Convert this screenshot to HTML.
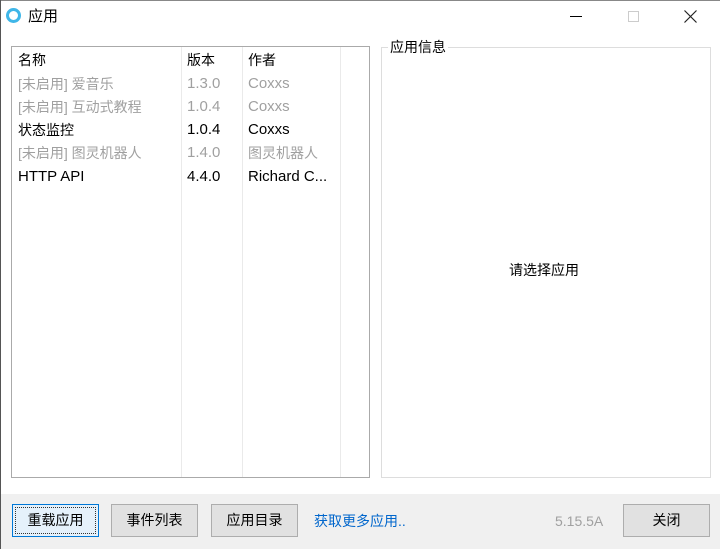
<!DOCTYPE html>
<html><head><meta charset="utf-8"><style>
*{margin:0;padding:0;box-sizing:border-box}
body{width:720px;height:549px;overflow:hidden;background:#fff;font-family:"Liberation Sans","Noto Sans CJK SC",sans-serif;font-size:14px;color:#000;position:relative}
.a{position:absolute;white-space:nowrap;line-height:20px}
.l{font-size:15px}
.g{color:#a0a0a0}
.btn{position:absolute;top:504px;height:33px;background:#e1e1e1;border:1px solid #adadad;text-align:center;line-height:31px;font-size:14px}
</style></head><body>
<div class="a" style="left:0;top:0;width:720px;height:1px;background:#888"></div>
<div class="a" style="left:0;top:0;width:1px;height:549px;background:#555"></div>
<div class="a" style="left:6px;top:8px;width:15px;height:15px;border-radius:50%;border:3px solid #3fb6e8"></div>
<div class="a" style="left:28px;top:7px;font-size:15px">应用</div>
<div class="a" style="left:570px;top:16px;width:12px;height:1px;background:#000"></div>
<div class="a" style="left:628px;top:11px;width:11px;height:11px;border:1px solid #ccc"></div>
<svg class="a" style="left:684px;top:10px" width="13" height="13"><path d="M0.5 0.5L12.5 12.5M12.5 0.5L0.5 12.5" stroke="#222" stroke-width="1.2"/></svg>

<div class="a" style="left:11px;top:46px;width:359px;height:432px;border:1px solid #aaa;background:#fff"></div>
<div class="a" style="left:181px;top:47px;width:1px;height:430px;background:#eaeaea"></div>
<div class="a" style="left:242px;top:47px;width:1px;height:430px;background:#eaeaea"></div>
<div class="a" style="left:340px;top:47px;width:1px;height:430px;background:#eaeaea"></div>

<div class="a" style="left:18px;top:50px">名称</div><div class="a" style="left:187px;top:50px">版本</div><div class="a" style="left:248px;top:50px">作者</div>
<div class="a g" style="left:18px;top:74px">[未启用] 爱音乐</div><div class="a g l" style="left:187px;top:74px">1.3.0</div><div class="a g l" style="left:248px;top:74px">Coxxs</div>
<div class="a g" style="left:18px;top:97px">[未启用] 互动式教程</div><div class="a g l" style="left:187px;top:97px">1.0.4</div><div class="a g l" style="left:248px;top:97px">Coxxs</div>
<div class="a" style="left:18px;top:120px">状态监控</div><div class="a l" style="left:187px;top:120px">1.0.4</div><div class="a l" style="left:248px;top:120px">Coxxs</div>
<div class="a g" style="left:18px;top:143px">[未启用] 图灵机器人</div><div class="a g l" style="left:187px;top:143px">1.4.0</div><div class="a g" style="left:248px;top:143px">图灵机器人</div>
<div class="a l" style="left:18px;top:167px">HTTP API</div><div class="a l" style="left:187px;top:167px">4.4.0</div><div class="a l" style="left:248px;top:167px">Richard C...</div>

<div class="a" style="left:381px;top:47px;width:330px;height:431px;border:1px solid #ddd"></div>
<div class="a" style="left:388px;top:37px;background:#fff;padding:0 2px">应用信息</div>
<div class="a" style="left:509px;top:260px">请选择应用</div>

<div class="a" style="left:1px;top:494px;width:719px;height:55px;background:#f0f0f0"></div>
<div class="btn" style="left:12px;width:87px;border:1px solid #0078d7;background:#e5f1fb"><span style="display:block;margin:2px;border:1px dotted #333;line-height:25px">重载应用</span></div>
<div class="btn" style="left:111px;width:87px">事件列表</div>
<div class="btn" style="left:211px;width:87px">应用目录</div>
<div class="a" style="left:314px;top:511px;color:#0066cc">获取更多应用..</div>
<div class="a" style="left:555px;top:511px;color:#a0a0a0">5.15.5A</div>
<div class="btn" style="left:623px;width:87px">关闭</div>
</body></html>
